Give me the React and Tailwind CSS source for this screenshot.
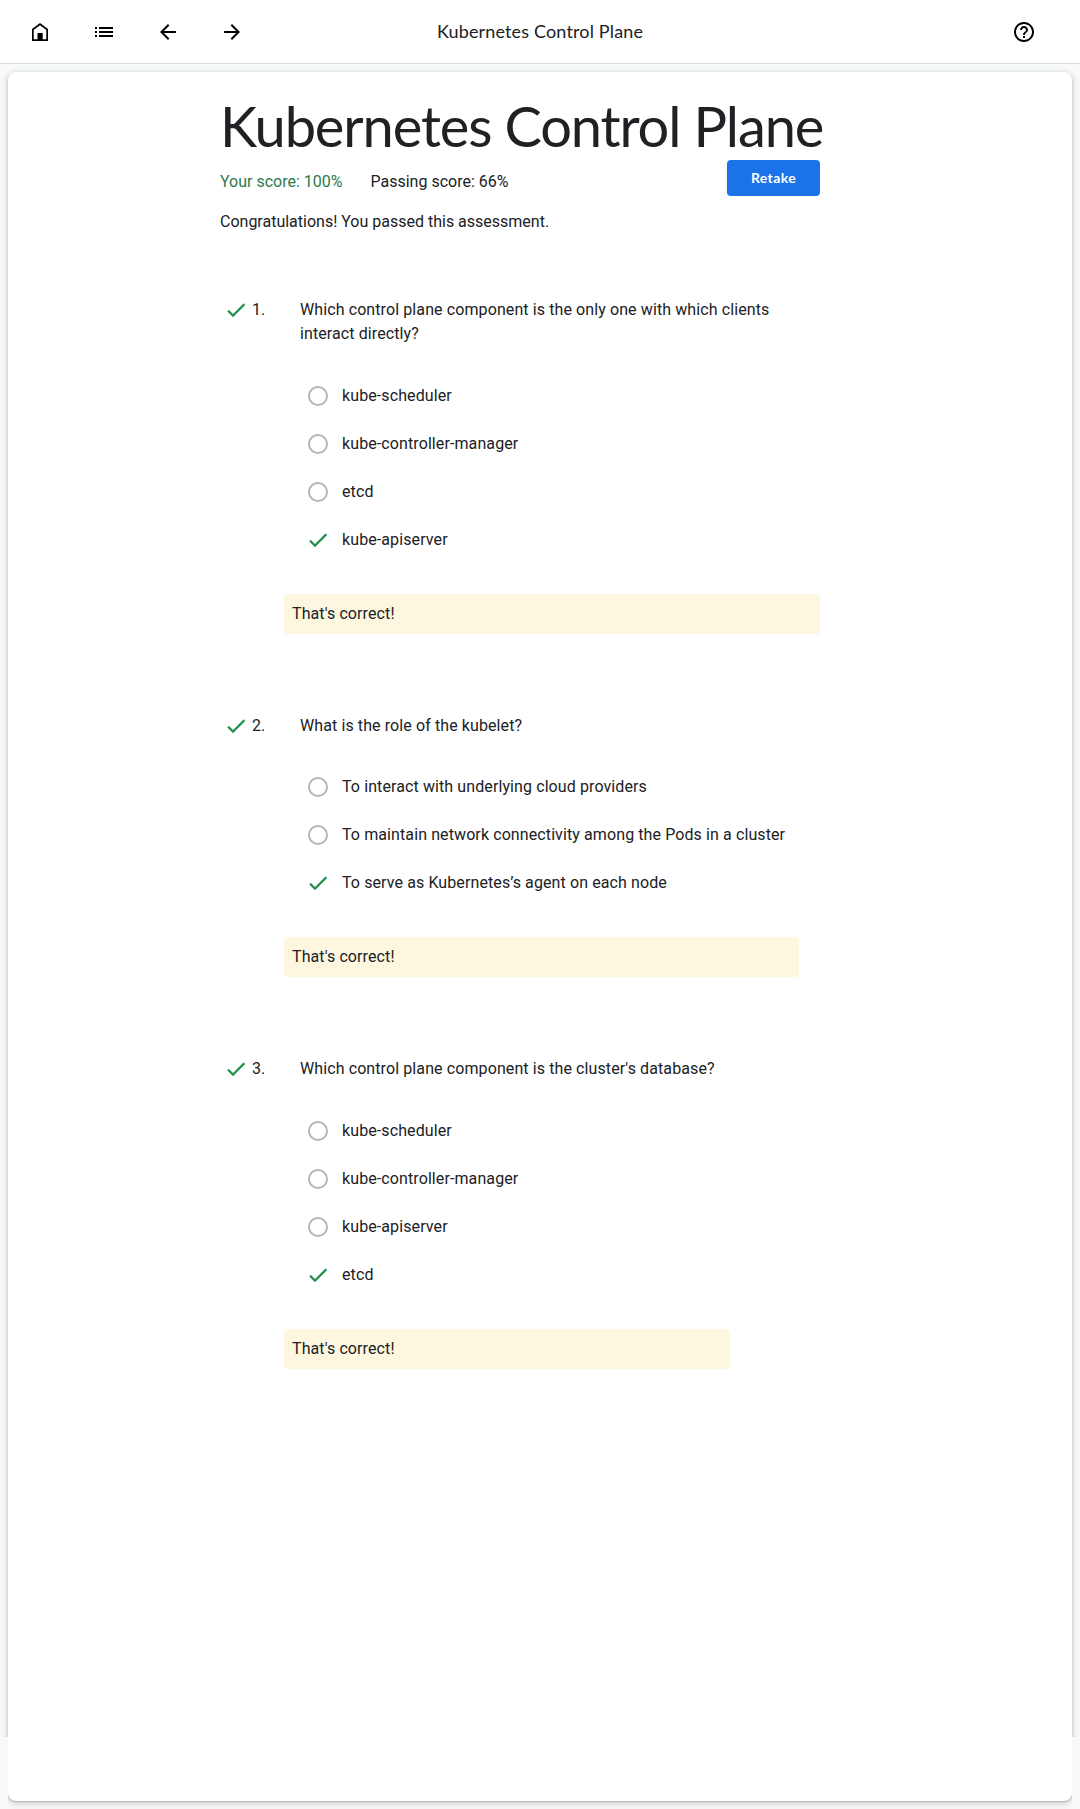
const questions = [
  {
    text: 'Which control plane component is the only one with which clients interact directly?',
    options: ['kube-scheduler', 'kube-controller-manager', 'etcd', 'kube-apiserver'],
    correct: 3,
    width: 'w-[536px]',
    listGap: 'mt-[26px]',
  },
  {
    text: 'What is the role of the kubelet?',
    options: [
      'To interact with underlying cloud providers',
      'To maintain network connectivity among the Pods in a cluster',
      'To serve as Kubernetes’s agent on each node',
    ],
    correct: 2,
    width: 'w-[515px]',
    listGap: 'mt-[25px]',
  },
  {
    text: "Which control plane component is the cluster's database?",
    options: ['kube-scheduler', 'kube-controller-manager', 'kube-apiserver', 'etcd'],
    correct: 3,
    width: 'w-[446px]',
    listGap: 'mt-[26px]',
  },
];

function Icon({ d, className = 'text-black' }) {
  return (
    <svg viewBox="0 0 24 24" className={`h-6 w-6 shrink-0 fill-current ${className}`}>
      <path fillRule="evenodd" d={d} />
    </svg>
  );
}

const icons = {
  home: 'M4 21V9l8-6 8 6v12H4zM5.7 19.3h3.8V13h5.2v6.3h3.6V9.9L12 5.2 5.7 9.9z',
  list: 'M3 13h2v-2H3v2zm0 4h2v-2H3v2zm0-8h2V7H3v2zm4 4h14v-2H7v2zm0 4h14v-2H7v2zM7 7v2h14V7H7z',
  back: 'M20 11H7.83l5.59-5.59L12 4l-8 8 8 8 1.41-1.41L7.83 13H20v-2z',
  forward: 'M12 4l-1.41 1.41L16.17 11H4v2h12.17l-5.58 5.59L12 20l8-8z',
  help: 'M11 18h2v-2h-2v2zm1-16C6.48 2 2 6.48 2 12s4.48 10 10 10 10-4.48 10-10S17.52 2 12 2zm0 18c-4.41 0-8-3.59-8-8s3.59-8 8-8 8 3.59 8 8-3.59 8-8 8zm0-14c-2.21 0-4 1.79-4 4h2c0-1.1.9-2 2-2s2 .9 2 2c0 2-3 1.75-3 5h2c0-2.25 3-2.5 3-5 0-2.21-1.79-4-4-4z',
  check: 'M9 16.17 4.83 12l-1.42 1.41L9 19 21 7l-1.41-1.41z',
};

function Question({ q, number }) {
  return (
    <li className="mb-20 flex tracking-[0.1px]">
      <div className="flex h-6 w-16 shrink-0 items-start pl-1">
        <Icon d={icons.check} className="stroke-current stroke-[0.3] text-[#1e8e4a]" />
        <span className="ml-1">{number}.</span>
      </div>
      <div className={q.width}>
        <p className="pr-3 pl-4">{q.text}</p>
        <ul className={`mb-[30px] pl-[23px] ${q.listGap}`}>
          {q.options.map((option, i) => (
            <li key={option} className="flex h-12 items-center">
              <span className="mr-[13px] flex h-6 w-[22px] items-center justify-center">
                {i === q.correct ? (
                  <Icon d={icons.check} className="stroke-current stroke-[0.3] text-[#1e8e4a]" />
                ) : (
                  <span className="h-5 w-5 rounded-full border-2 border-[#b4b4b4]" />
                )}
              </span>
              <span>{option}</span>
            </li>
          ))}
        </ul>
        <div className="h-10 rounded bg-[#fef7e0] px-2 pt-2">That's correct!</div>
      </div>
    </li>
  );
}

export default function App() {
  return (
    <div className="flex h-[1809px] w-[1080px] flex-col bg-[#f8f9fa] font-['Roboto',sans-serif] text-base leading-6 text-[#202124]">
      <header className="grid h-16 grid-cols-[1fr_auto_1fr] items-center border-b border-[#dadce0] bg-white pr-11 pl-7">
        <nav className="flex gap-10">
          <Icon d={icons.home} />
          <Icon d={icons.list} />
          <Icon d={icons.back} />
          <Icon d={icons.forward} />
        </nav>
        <div className="ml-4 pb-0.5 font-['Lato',sans-serif] text-[18px] tracking-[0.15px]">Kubernetes Control Plane</div>
        <div className="flex justify-end">
          <Icon d={icons.help} />
        </div>
      </header>
      <main className="mx-2 mt-2">
        <section className="h-[1665px] rounded-t-lg bg-white pt-[22px] pl-[212px] shadow-[0_1px_2px_rgba(60,64,67,0.3),0_2px_6px_2px_rgba(60,64,67,0.15)] [clip-path:inset(-8px_-8px_0_-8px)]">
          <h1 className="mb-0.5 h-16 font-['Lato',sans-serif] text-[56px] leading-[64px] tracking-[-1.13px] whitespace-nowrap">
            Kubernetes Control Plane
          </h1>
          <div className="flex h-9 w-[600px] items-start justify-between">
            <div className="flex gap-7 pt-2.5">
              <span className="text-[#2c7a4b]">Your score: 100%</span>
              <span>Passing score: 66%</span>
            </div>
            <button className="h-9 w-[93px] rounded bg-[#1a73e8] font-['Lato',sans-serif] text-sm font-bold tracking-[0.4px] text-white">
              Retake
            </button>
          </div>
          <p className="mt-3.5 mb-16">Congratulations! You passed this assessment.</p>
          <ol>
            {questions.map((q, i) => (
              <Question key={q.text} q={q} number={i + 1} />
            ))}
          </ol>
        </section>
        <div className="h-16 rounded-b-lg bg-white shadow-[0_1px_2px_rgba(60,64,67,0.3),0_2px_6px_2px_rgba(60,64,67,0.15)] [clip-path:inset(0_0_-8px_0)]" />
      </main>
    </div>
  );
}
